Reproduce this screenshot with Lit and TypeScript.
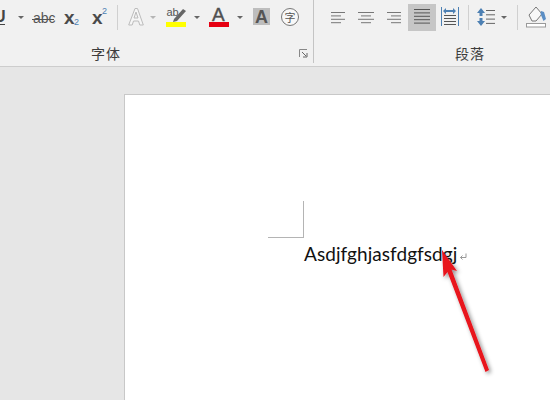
import { LitElement, html, css, svg } from "lit";
import { customElement } from "lit/decorators.js";

const slot = (x0: number, x1: number, body: unknown) => html`<svg class="slot" width=${x1 - x0} height="36" viewBox="${x0} 0 ${x1 - x0} 36">${body}</svg>`;
const caret = (x: number, y: number, c = "#666") => svg`<path d="M${x} ${y}h6l-3 3z" fill=${c}/>`;
const lines = (xs: [number, number][], y0: number, step: number, c = "#777") =>
  xs.map(([a, b], i) => svg`<line x1=${a} x2=${b} y1=${y0 + i * step + 0.5} y2=${y0 + i * step + 0.5} stroke=${c}/>`);

@customElement("app-root")
export class AppRoot extends LitElement {
  static styles = css`
    :host { display: block; width: 550px; height: 400px; overflow: hidden; position: relative; background: #e6e6e6; font-family: "Liberation Sans", sans-serif; }
    .ribbon { display: flex; height: 67px; box-sizing: border-box; background: #f1f1f1; border-bottom: 1px solid #cdcdcd; }
    .group { display: flex; flex-direction: column; height: 63px; box-sizing: border-box; flex: none; }
    .font { width: 314px; border-right: 1px solid #c4c4c4; }
    .para { flex: 1; min-width: 0; }
    .tools { display: flex; height: 36px; overflow: hidden; }
    .slot { display: block; flex: none; }
    .foot { position: relative; flex: 1; display: flex; justify-content: center; }
    .label { font: 14px/20px "Noto Sans CJK SC", sans-serif; color: #3c3c3c; margin-top: 11px; letter-spacing: 1px; }
    .font .label { margin-right: 101px; }
    .para .label { margin-left: 76px; }
    .launcher { position: absolute; right: 5px; top: 17px; }
    .canvas { height: 333px; padding: 27px 0 0 124px; box-sizing: border-box; overflow: hidden; }
    .page { background: #fff; border: 1px solid #c8c8c8; border-right: none; height: 400px; padding: 106px 0 0 143px; box-sizing: border-box; }
    .crop { width: 35px; height: 36px; border-right: 1px solid #b4b4b4; border-bottom: 1px solid #b4b4b4; }
    .line { margin: 3px 0 0 36px; display: flex; align-items: baseline; font: 19px/26px Lato, "Open Sans", sans-serif; color: #111; letter-spacing: 0.05px; white-space: nowrap; }
    .mark { margin-left: 2px; }
    .arrow { position: absolute; left: 430px; top: 240px; overflow: visible; }
  `;

  render() {
    const f = "Liberation Sans, sans-serif";
    return html`
      <div class="ribbon">
        <div class="group font">
          <div class="tools">
            ${slot(0, 12, svg`<text x="-6" y="22" font-family=${f} font-size="16" font-weight="700" fill="#444">U</text><line x1="-6" x2="5" y1="24.5" y2="24.5" stroke="#444"/>`)}
            ${slot(12, 28, caret(18, 16))}
            ${slot(28, 58, svg`<text x="33" y="23" font-family=${f} font-size="14" fill="#555">abc</text><line x1="32" x2="54" y1="19.5" y2="19.5" stroke="#555"/>`)}
            ${slot(58, 85, svg`<text x="64" y="24" font-family=${f} font-size="19" font-weight="700" fill="#4a4a4a">x</text><text x="74" y="25" font-family=${f} font-size="9" fill="#4d80b3">2</text>`)}
            ${slot(85, 113, svg`<text x="92" y="24" font-family=${f} font-size="19" font-weight="700" fill="#4a4a4a">x</text><text x="102" y="14" font-family=${f} font-size="9" fill="#4d80b3">2</text>`)}
            ${slot(113, 122, svg`<line x1="117.5" x2="117.5" y1="5" y2="30" stroke="#d0d0d0"/>`)}
            ${slot(122, 147, svg`<path d="M128.7 25L135 8.5h2.5L143.3 25h-3.5l-1.3-4h-5l-1.3 4zM134 18h4l-2-6z" fill="#f6f6f6" stroke="#bcbcbc"/>`)}
            ${slot(147, 160, caret(150, 16, "#b5b5b5"))}
            ${slot(160, 190, svg`<text x="166.5" y="15.5" font-family=${f} font-size="11" fill="#555">ab</text><path d="M174 19l9-10 3 2-9 10-4 1z" fill="#666"/><rect x="166" y="22" width="20" height="5" fill="#ffff00"/>`)}
            ${slot(190, 204, caret(194, 16))}
            ${slot(204, 233, svg`<text x="212" y="21" font-family=${f} font-size="19" fill="#505050" stroke="#505050" stroke-width="0.4">A</text><rect x="209" y="22" width="20" height="5" fill="#e60012"/>`)}
            ${slot(233, 247, caret(237, 16))}
            ${slot(247, 275, svg`<rect x="253" y="8" width="17" height="17" fill="#bdbdbd"/><text x="255" y="23" font-family=${f} font-size="18" font-weight="700" fill="#555">A</text>`)}
            ${slot(275, 312, svg`<circle cx="290" cy="17" r="8.5" fill="#f8f8f8" stroke="#777"/><text x="284.5" y="21.5" font-family="Noto Sans CJK SC, sans-serif" font-size="11" fill="#555">字</text>`)}
          </div>
          <div class="foot">
            <span class="label">字体</span>
            <svg class="launcher" width="9" height="9" viewBox="0 0 9 9"><path d="M.5 8V.5H8" fill="none" stroke="#888"/><path d="M3 3l4 4M8 4v4H4" fill="none" stroke="#666"/></svg>
          </div>
        </div>
        <div class="group para">
          <div class="tools">
            ${slot(314, 352, lines([[331, 345], [331, 341], [331, 345], [331, 341]], 12, 3.4))}
            ${slot(352, 380, lines([[358, 374], [361, 371], [358, 374], [361, 371]], 12, 3.4))}
            ${slot(380, 408, lines([[387, 401], [391, 401], [387, 401], [391, 401]], 12, 3.4))}
            ${slot(408, 436, svg`<rect x="408" y="4" width="28" height="27" fill="#c6c6c6"/>${lines([[414, 430], [414, 430], [414, 430], [414, 430], [414, 430]], 9, 3.4, "#555")}`)}
            ${slot(436, 464, svg`<line x1="441.5" x2="441.5" y1="7" y2="26" stroke="#4d80b3"/><line x1="458.5" x2="458.5" y1="7" y2="26" stroke="#4d80b3"/><path d="M443 11l3-3v2h7V8l3 3-3 3v-2h-7v2z" fill="#4d80b3"/>${lines([[444, 456], [444, 456], [444, 456], [444, 456]], 15, 3, "#555")}`)}
            ${slot(464, 472, svg`<line x1="468.5" x2="468.5" y1="5" y2="30" stroke="#d0d0d0"/>`)}
            ${slot(472, 498, svg`<path d="M481 8l4 5h-2.5v3h-3v-3H477zM481 26l4-5h-2.5v-3h-3v3H477z" fill="#4d80b3"/>${lines([[486, 495], [486, 495], [486, 495], [486, 495]], 10, 4.3, "#666")}`)}
            ${slot(498, 513, caret(501, 16))}
            ${slot(513, 522, svg`<line x1="517.5" x2="517.5" y1="5" y2="30" stroke="#d0d0d0"/>`)}
            ${slot(522, 550, svg`<path d="M529 15l7-8 6 7-6 7h-4z" fill="#f8f8f8" stroke="#777"/><path d="M541 11l3 1 2 7-2.5 2-3-7z" fill="#5b8ec4"/><rect x="526.5" y="23.5" width="19" height="3.5" fill="#fff" stroke="#999"/>`)}
          </div>
          <div class="foot"><span class="label">段落</span></div>
        </div>
      </div>
      <div class="canvas">
        <div class="page">
          <div class="crop"></div>
          <div class="line">
            <span>Asdjfghjasfdgfsdgj</span>
            <svg class="mark" width="8" height="8" viewBox="0 0 8 8"><path d="M7 .5V4.5H1.5M3.5 2.5l-2 2 2 2" fill="none" stroke="#999"/></svg>
          </div>
        </div>
      </div>
      <svg class="arrow" width="70" height="140" viewBox="430 240 70 140">
        <defs><filter id="s" x="-50%" y="-20%" width="200%" height="140%"><feDropShadow dx="2" dy="2" stdDeviation="2" flood-color="#000" flood-opacity="0.45"/></filter></defs>
        <path d="M442 250L457 271L451.5 269.5L489 370L485.5 372L447.5 272L443.5 277z" fill="#e8121c" filter="url(#s)"/>
      </svg>
    `;
  }
}
